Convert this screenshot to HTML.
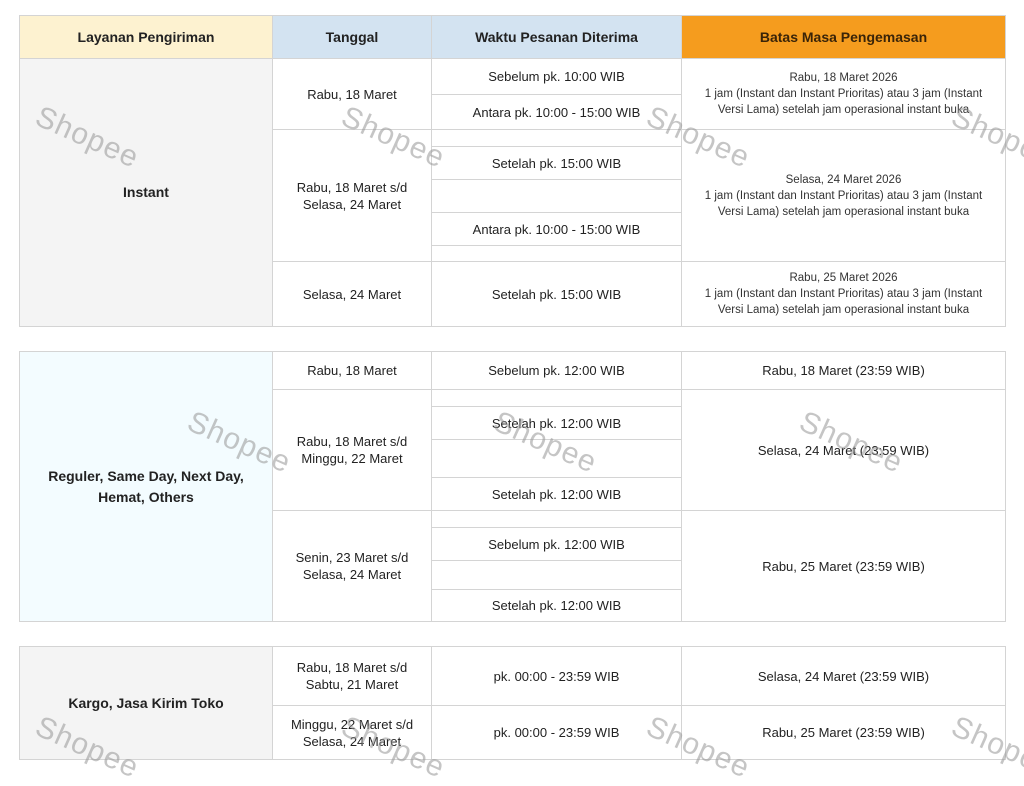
<!DOCTYPE html>
<html><head><meta charset="utf-8"><style>
body{margin:0;width:1024px;height:777px;background:#fff;position:relative;overflow:hidden;font-family:"Liberation Sans",sans-serif;color:#222}
.c{position:absolute;box-sizing:border-box;border:1px solid #d4d4d4;display:flex;align-items:center;justify-content:center;text-align:center;font-size:13px;line-height:17px;margin:0 -1px -1px 0}
.h{font-weight:bold;font-size:14px}
.s{font-size:11.5px;line-height:16px;color:#333}
.b{font-weight:bold;font-size:14px;line-height:21px}
.w{position:absolute;font-size:30px;color:rgba(150,150,150,.55);transform:rotate(24deg);transform-origin:left top;white-space:nowrap;letter-spacing:1px}
</style></head><body>
<!-- header -->
<div class="c h" style="left:19px;top:15px;width:254px;height:44px;background:#fdf2d0">Layanan Pengiriman</div>
<div class="c h" style="left:272px;top:15px;width:160px;height:44px;background:#d3e3f1">Tanggal</div>
<div class="c h" style="left:431px;top:15px;width:251px;height:44px;background:#d3e3f1">Waktu Pesanan Diterima</div>
<div class="c h" style="left:681px;top:15px;width:325px;height:44px;background:#f59c1e;color:#3a2408">Batas Masa Pengemasan</div>
<!-- table1 -->
<div class="c b" style="left:19px;top:58px;width:254px;height:269px;background:#f4f4f4">Instant</div>
<div class="c" style="left:272px;top:58px;width:160px;height:72px">Rabu, 18 Maret</div>
<div class="c" style="left:272px;top:129px;width:160px;height:133px">Rabu, 18 Maret s/d<br>Selasa, 24 Maret</div>
<div class="c" style="left:272px;top:261px;width:160px;height:66px">Selasa, 24 Maret</div>
<div class="c" style="left:431px;top:58px;width:251px;height:37px">Sebelum pk. 10:00 WIB</div>
<div class="c" style="left:431px;top:94px;width:251px;height:36px">Antara pk. 10:00 - 15:00 WIB</div>
<div class="c" style="left:431px;top:129px;width:251px;height:18px"></div>
<div class="c" style="left:431px;top:146px;width:251px;height:34px">Setelah pk. 15:00 WIB</div>
<div class="c" style="left:431px;top:179px;width:251px;height:34px"></div>
<div class="c" style="left:431px;top:212px;width:251px;height:34px">Antara pk. 10:00 - 15:00 WIB</div>
<div class="c" style="left:431px;top:245px;width:251px;height:17px"></div>
<div class="c" style="left:431px;top:261px;width:251px;height:66px">Setelah pk. 15:00 WIB</div>
<div class="c s" style="left:681px;top:58px;width:325px;height:72px">Rabu, 18 Maret 2026<br>1 jam (Instant dan Instant Prioritas) atau 3 jam (Instant<br>Versi Lama) setelah jam operasional instant buka</div>
<div class="c s" style="left:681px;top:129px;width:325px;height:133px">Selasa, 24 Maret 2026<br>1 jam (Instant dan Instant Prioritas) atau 3 jam (Instant<br>Versi Lama) setelah jam operasional instant buka</div>
<div class="c s" style="left:681px;top:261px;width:325px;height:66px">Rabu, 25 Maret 2026<br>1 jam (Instant dan Instant Prioritas) atau 3 jam (Instant<br>Versi Lama) setelah jam operasional instant buka</div>
<!-- table2 -->
<div class="c b" style="left:19px;top:351px;width:254px;height:271px;background:#f3fcff">Reguler, Same Day, Next Day,<br>Hemat, Others</div>
<div class="c" style="left:272px;top:351px;width:160px;height:39px">Rabu, 18 Maret</div>
<div class="c" style="left:272px;top:389px;width:160px;height:122px">Rabu, 18 Maret s/d<br>Minggu, 22 Maret</div>
<div class="c" style="left:272px;top:510px;width:160px;height:112px">Senin, 23 Maret s/d<br>Selasa, 24 Maret</div>
<div class="c" style="left:431px;top:351px;width:251px;height:39px">Sebelum pk. 12:00 WIB</div>
<div class="c" style="left:431px;top:389px;width:251px;height:18px"></div>
<div class="c" style="left:431px;top:406px;width:251px;height:34px">Setelah pk. 12:00 WIB</div>
<div class="c" style="left:431px;top:439px;width:251px;height:39px"></div>
<div class="c" style="left:431px;top:477px;width:251px;height:34px">Setelah pk. 12:00 WIB</div>
<div class="c" style="left:431px;top:510px;width:251px;height:18px"></div>
<div class="c" style="left:431px;top:527px;width:251px;height:34px">Sebelum pk. 12:00 WIB</div>
<div class="c" style="left:431px;top:560px;width:251px;height:30px"></div>
<div class="c" style="left:431px;top:589px;width:251px;height:33px">Setelah pk. 12:00 WIB</div>
<div class="c" style="left:681px;top:351px;width:325px;height:39px">Rabu, 18 Maret (23:59 WIB)</div>
<div class="c" style="left:681px;top:389px;width:325px;height:122px">Selasa, 24 Maret (23:59 WIB)</div>
<div class="c" style="left:681px;top:510px;width:325px;height:112px">Rabu, 25 Maret (23:59 WIB)</div>
<!-- table3 -->
<div class="c b" style="left:19px;top:646px;width:254px;height:114px;background:#f4f4f4">Kargo, Jasa Kirim Toko</div>
<div class="c" style="left:272px;top:646px;width:160px;height:60px">Rabu, 18 Maret s/d<br>Sabtu, 21 Maret</div>
<div class="c" style="left:272px;top:705px;width:160px;height:55px">Minggu, 22 Maret s/d<br>Selasa, 24 Maret</div>
<div class="c" style="left:431px;top:646px;width:251px;height:60px">pk. 00:00 - 23:59 WIB</div>
<div class="c" style="left:431px;top:705px;width:251px;height:55px">pk. 00:00 - 23:59 WIB</div>
<div class="c" style="left:681px;top:646px;width:325px;height:60px">Selasa, 24 Maret (23:59 WIB)</div>
<div class="c" style="left:681px;top:705px;width:325px;height:55px">Rabu, 25 Maret (23:59 WIB)</div>
<!-- watermarks -->
<div class="w" style="left:44px;top:100px">Shopee</div>
<div class="w" style="left:350px;top:100px">Shopee</div>
<div class="w" style="left:655px;top:100px">Shopee</div>
<div class="w" style="left:960px;top:100px">Shopee</div>
<div class="w" style="left:196px;top:405px">Shopee</div>
<div class="w" style="left:502px;top:405px">Shopee</div>
<div class="w" style="left:808px;top:405px">Shopee</div>
<div class="w" style="left:44px;top:710px">Shopee</div>
<div class="w" style="left:350px;top:710px">Shopee</div>
<div class="w" style="left:655px;top:710px">Shopee</div>
<div class="w" style="left:960px;top:710px">Shopee</div>
</body></html>
